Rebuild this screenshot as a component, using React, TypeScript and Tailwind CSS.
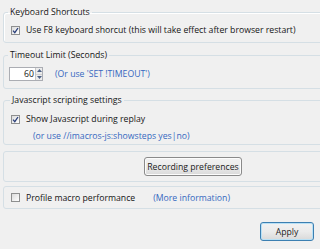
import React from "react";

function Check({ checked }: { checked: boolean }) {
  return (
    <span className="inline-flex items-center justify-center w-[9px] h-[9px] border border-[#8e8f8f] bg-gradient-to-br from-[#dcdcdc] to-[#ffffff] shrink-0">
      {checked && (
        <svg width="7" height="7" viewBox="0 0 7 7">
          <path d="M1 3.6 L2.8 5.6 L6 1" fill="none" stroke="#2a3f7a" strokeWidth="1.3" />
        </svg>
      )}
    </span>
  );
}

function Btn({ children, primary, className }: { children: React.ReactNode; primary?: boolean; className?: string }) {
  return (
    <div
      className={
        "flex items-center justify-center rounded-[3px] border bg-gradient-to-b from-[#f2f2f2] via-[#ebebeb] to-[#d9d9d9] text-[#1b1b1b] " +
        (primary ? "border-[#3c7fb1] shadow-[inset_0_0_0_1px_#b8e0f5] " : "border-[#8a8a8a] shadow-[inset_0_0_0_1px_#fcfcfc] ") +
        (className ?? "")
      }
    >
      {children}
    </div>
  );
}

export default function App() {
  return (
    <div
      className="w-[320px] h-[249px] overflow-hidden bg-[#f0f0f0] text-[8.7px] leading-[12px] text-[#151515]"
      style={{ fontFamily: '"Open Sans", "Noto Sans", sans-serif' }}
    >
      <div className="w-[340px] pl-[3px] pt-[6px] flex flex-col">
        <fieldset className="border border-[#d5dfe5] rounded-[3px] h-[37px] pl-[7px] pt-[8px] shadow-[inset_1px_1px_0_#ffffff]">
          <legend className="px-[2px] ml-[-3px]">Keyboard Shortcuts</legend>
          <div className="flex items-center gap-[6px] mt-[-2px]">
            <Check checked />
            <span>Use F8 keyboard shorcut (this will take effect after browser restart)</span>
          </div>
        </fieldset>

        <fieldset className="mt-[6px] border border-[#d5dfe5] rounded-[3px] h-[40px] pl-[5px] pt-[6px]">
          <legend className="px-[2px] ml-[-1px]">Timeout Limit (Seconds)</legend>
          <div className="flex items-center">
            <div className="flex w-[34px] h-[14px] border border-[#abadb3] bg-white">
              <span className="flex-1 text-right pr-[1px] leading-[12px]">60</span>
              <div className="flex flex-col w-[7px] border-l border-[#c6c6c6] bg-[#ececec]">
                <div className="flex-1 flex items-center justify-center">
                  <svg width="5" height="3" viewBox="0 0 5 3"><path d="M0 3 L2.5 0 L5 3 Z" fill="#4d6185" /></svg>
                </div>
                <div className="flex-1 flex items-center justify-center border-t border-[#d0d0d0]">
                  <svg width="5" height="3" viewBox="0 0 5 3"><path d="M0 0 L2.5 3 L5 0 Z" fill="#4d6185" /></svg>
                </div>
              </div>
            </div>
            <span className="ml-[12px] text-[#3668c0]">(Or use 'SET !TIMEOUT')</span>
          </div>
        </fieldset>

        <fieldset className="mt-[5px] border border-[#d5dfe5] rounded-[3px] h-[51px] pl-[7px] pt-[7px]">
          <legend className="px-[2px] ml-[-1px]">Javascript scripting settings</legend>
          <div className="flex items-center gap-[6px]">
            <Check checked />
            <span>Show Javascript during replay</span>
          </div>
          <div className="pl-[22px] mt-[5px] text-[#3668c0]">(or use //imacros-js:showsteps yes|no)</div>
        </fieldset>

        <div className="mt-[6px] border border-[#d5dfe5] rounded-[3px] h-[31px] flex items-center pl-[140px]">
          <Btn className="w-[98px] h-[19px]">Recording preferences</Btn>
        </div>

        <div className="mt-[4px] border border-[#d5dfe5] rounded-[3px] h-[23px] flex items-center pl-[7px]">
          <Check checked={false} />
          <span className="ml-[6px]">Profile macro performance</span>
          <span className="ml-[18px] text-[#3668c0]">(More information)</span>
        </div>
      </div>
      <div className="flex justify-end pr-[6px] mt-[13px]">
        <Btn primary className="w-[54px] h-[19px]">Apply</Btn>
      </div>
    </div>
  );
}
